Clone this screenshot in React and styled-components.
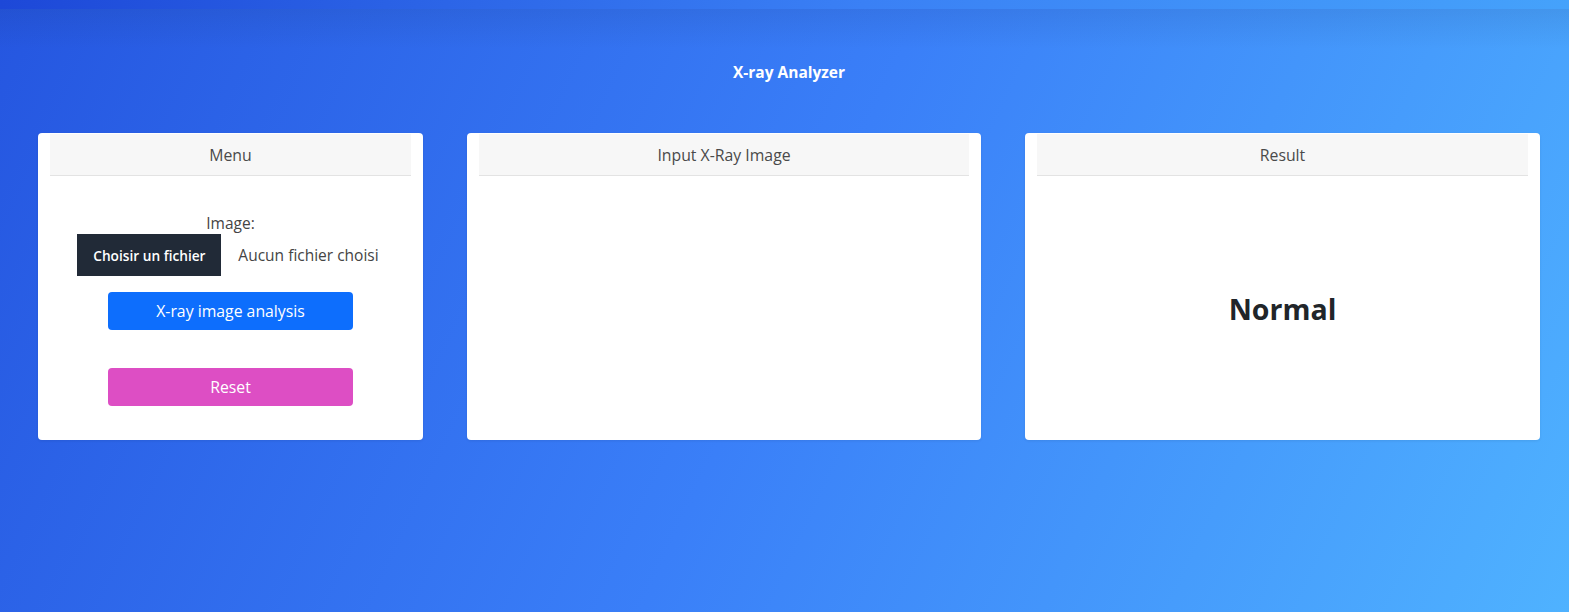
import React from "react";
import styled, { createGlobalStyle } from "styled-components";

const GlobalStyle = createGlobalStyle`
  html, body {
    margin: 0;
    padding: 0;
  }
  body {
    font-family: "Open Sans", "Noto Sans", sans-serif;
    color: #212529;
  }
`;

const App = () => (
  <Page>
    <GlobalStyle />
    <TopBar />
    <Header>
      <Title>X-ray Analyzer</Title>
    </Header>
    <Columns>
      <Card>
        <CardHeader>Menu</CardHeader>
        <MenuBody>
          <FieldLabel>Image:</FieldLabel>
          <FileRow>
            <FileButton>Choisir un fichier</FileButton>
            <FileName>Aucun fichier choisi</FileName>
          </FileRow>
          <Button bg="#0d6efd" mt={16}>
            X-ray image analysis
          </Button>
          <Button bg="#dd4ec4" mt={38}>
            Reset
          </Button>
        </MenuBody>
      </Card>
      <Card>
        <CardHeader>Input X-Ray Image</CardHeader>
      </Card>
      <Card>
        <CardHeader>Result</CardHeader>
        <ResultBody>
          <ResultText>Normal</ResultText>
        </ResultBody>
      </Card>
    </Columns>
  </Page>
);

export default App;

const Page = styled.div`
  min-height: 612px;
  background: linear-gradient(115deg, #2556e0 0%, #3a7ff8 50%, #4fb2ff 100%);
  display: flex;
  flex-direction: column;
`;

const TopBar = styled.div`
  height: 9px;
  background: linear-gradient(90deg, #1d48d8 0%, #3a80f5 55%, #45a2fb 100%);
`;

const Header = styled.div`
  height: 90px;
  padding: 52px 0 0 9px;
  box-sizing: border-box;
  display: flex;
  justify-content: center;
  background: linear-gradient(rgba(20, 40, 90, 0.1), rgba(20, 40, 90, 0) 40px);
`;

const Title = styled.h1`
  margin: 0;
  font-size: 15.5px;
  font-weight: 700;
  color: #ffffff;
  line-height: 22px;
`;

const Columns = styled.div`
  display: grid;
  grid-template-columns: 385px 514px 515px;
  column-gap: 44px;
  padding: 34px 29px 0 38px;
`;

const Card = styled.div`
  height: 307px;
  background: #ffffff;
  border-radius: 4px;
  padding: 1px 12px 0;
  box-sizing: border-box;
  display: flex;
  flex-direction: column;
  box-shadow: 0 1px 3px rgba(0, 0, 0, 0.08);
`;

const CardHeader = styled.div`
  height: 41px;
  background: #f7f7f7;
  border-bottom: 1px solid #e3e3e3;
  display: flex;
  align-items: center;
  justify-content: center;
  font-size: 15.8px;
  color: #4a4a4a;
`;

const MenuBody = styled.div`
  display: flex;
  flex-direction: column;
  align-items: center;
  padding-top: 36px;
`;

const FieldLabel = styled.div`
  font-size: 15.5px;
  line-height: 22px;
  color: #444;
`;

const FileRow = styled.div`
  display: flex;
  align-items: center;
  margin-left: -5px;
`;

const FileButton = styled.div`
  width: 144px;
  height: 42px;
  background: #212a37;
  color: #ffffff;
  font-size: 13.7px;
  font-weight: 600;
  display: flex;
  align-items: center;
  justify-content: center;
`;

const FileName = styled.div`
  margin-left: 17px;
  font-size: 15.5px;
  color: #444;
`;

const Button = styled.div`
  width: 245px;
  height: 38px;
  margin-top: ${({ mt }) => mt}px;
  background: ${({ bg }) => bg};
  border-radius: 4px;
  color: #ffffff;
  font-size: 15.8px;
  display: flex;
  align-items: center;
  justify-content: center;
`;

const ResultBody = styled.div`
  flex: 1;
  display: flex;
  align-items: center;
  justify-content: center;
  padding-top: 2px;
`;

const ResultText = styled.div`
  font-size: 28.5px;
  font-weight: 700;
  color: #212529;
`;
